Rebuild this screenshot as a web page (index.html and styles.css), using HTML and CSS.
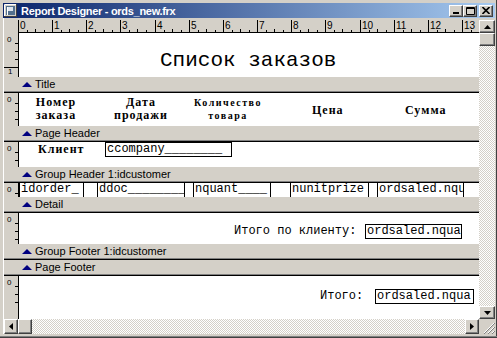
FILE: index.html
```html
<!DOCTYPE html>
<html lang="ru">
<head>
  <meta charset="UTF-8">
  <title>Report Designer - ords_new.frx</title>
  <link rel="stylesheet" href="styles.css">
</head>
<body>
  <div class="window">
    <div class="titlebar">
      <svg class="app-icon" width="13" height="13" viewBox="0 0 13 13">
        <rect x="0.5" y="0.5" width="12" height="12" fill="#d4d0c8" stroke="#404040"/>
        <path d="M0.5 12V0.5H12" fill="none" stroke="#fff"/>
        <rect x="2" y="2" width="9" height="9" fill="#52708f"/>
        <rect x="4" y="3" width="5" height="4" fill="#dfe6ee"/>
        <path d="M3.5 3V11" stroke="#fff"/>
      </svg>
      <span class="title">Report Designer - ords_new.frx</span>
      <div class="caption-buttons">
        <span class="cbtn"><svg width="8" height="7" viewBox="0 0 8 7"><rect x="1" y="5" width="6" height="2" fill="#000"/></svg></span>
        <span class="cbtn"><svg width="9" height="8" viewBox="0 0 9 8"><path d="M0.5 0.5H8.5V7.5H0.5Z M0.5 1.5H8.5" fill="none" stroke="#000"/></svg></span>
        <span class="cbtn close"><svg width="8" height="7" viewBox="0 0 8 7"><path d="M0.5 0L7.5 7M7.5 0L0.5 7" stroke="#000" stroke-width="1.6"/></svg></span>
      </div>
    </div>

    <div class="workspace">
      <div class="ruler-row">
        <div class="ruler-corner"></div>
        <svg class="ruler" width="461" height="15" viewBox="0 0 461 15">
          <path d="M0 14.5H461" stroke="#000"/>
          <path d="M0.5 2V14M34.5 2V14M68.5 2V14M102.5 2V14M137.5 2V14M171.5 2V14M205.5 2V14M239.5 2V14M273.5 2V14M307.5 2V14M342.5 2V14M376.5 2V14M410.5 2V14M444.5 2V14" stroke="#000"/>
          <path d="M9.5 12V14M26.5 12V14M43.5 12V14M60.5 12V14M77.5 12V14M94.5 12V14M111.5 12V14M128.5 12V14M146.5 12V14M163.5 12V14M180.5 12V14M197.5 12V14M214.5 12V14M231.5 12V14M248.5 12V14M265.5 12V14M282.5 12V14M299.5 12V14M316.5 12V14M333.5 12V14M351.5 12V14M368.5 12V14M385.5 12V14M402.5 12V14M419.5 12V14M436.5 12V14M453.5 12V14" stroke="#000"/>
          <path d="M17.5 11V14M51.5 11V14M85.5 11V14M119.5 11V14M154.5 11V14M188.5 11V14M222.5 11V14M256.5 11V14M290.5 11V14M324.5 11V14M359.5 11V14M393.5 11V14M427.5 11V14" stroke="#000"/>
          <text x="2" y="11">0</text>
          <text x="36" y="11">1</text>
          <text x="70" y="11">2</text>
          <text x="104" y="11">3</text>
          <text x="139" y="11">4</text>
          <text x="173" y="11">5</text>
          <text x="207" y="11">6</text>
          <text x="241" y="11">7</text>
          <text x="275" y="11">8</text>
          <text x="309" y="11">9</text>
          <text x="344" y="11">10</text>
          <text x="378" y="11">11</text>
          <text x="412" y="11">12</text>
          <text x="446" y="11">13</text>
        </svg>
      </div>

      <div class="vscroll">
        <span class="sbtn"><svg width="7" height="4" viewBox="0 0 7 4"><path d="M3.5 0L7 4H0Z" fill="#000"/></svg></span>
        <span class="thumb"></span>
        <span class="track"></span>
        <span class="sbtn"><svg width="7" height="4" viewBox="0 0 7 4"><path d="M0 0H7L3.5 4Z" fill="#000"/></svg></span>
      </div>

      <div class="bands">
        <div class="band band-title">
          <div class="vr"><span class="vr-num">0</span><span class="vr-major">1</span></div>
          <div class="area">
            <span class="report-title">Список заказов</span>
          </div>
        </div>
        <div class="bar"><span class="tri"></span>Title</div>

        <div class="band band-page-header">
          <div class="vr"><span class="vr-num">0</span></div>
          <div class="area">
            <span class="col-head h-num">Номер<br>заказа</span>
            <span class="col-head h-date">Дата<br>продажи</span>
            <span class="col-head h-qty">Количество<br>товара</span>
            <span class="col-head h-price">Цена</span>
            <span class="col-head h-sum">Сумма</span>
          </div>
        </div>
        <div class="bar"><span class="tri"></span>Page Header</div>

        <div class="band band-group-header">
          <div class="vr"><span class="vr-num">0</span></div>
          <div class="area">
            <span class="col-head lbl-client">Клиент</span>
            <span class="field fld-company">ccompany________</span>
          </div>
        </div>
        <div class="bar"><span class="tri"></span>Group Header 1:idcustomer</div>

        <div class="band band-detail">
          <div class="vr"><span class="vr-num">0</span></div>
          <div class="area">
            <span class="field cut fld-order">idorder_</span>
            <span class="field cut fld-date">ddoc________</span>
            <span class="field cut fld-qty">nquant____</span>
            <span class="field cut fld-price">nunitprize</span>
            <span class="field cut fld-total">ordsaled.nquant</span>
          </div>
        </div>
        <div class="bar"><span class="tri"></span>Detail</div>

        <div class="band band-group-footer">
          <div class="vr"><span class="vr-num">0</span></div>
          <div class="area">
            <span class="mono lbl-subtotal">Итого по клиенту:</span>
            <span class="field fld-subtotal">ordsaled.nqua</span>
          </div>
        </div>
        <div class="bar"><span class="tri"></span>Group Footer 1:idcustomer</div>

        <div class="bar"><span class="tri"></span>Page Footer</div>

        <div class="band band-summary">
          <div class="vr"><span class="vr-num">0</span></div>
          <div class="area">
            <span class="mono lbl-grand">Итого:</span>
            <span class="field fld-grand">ordsaled.nqua</span>
          </div>
        </div>
      </div>

      <div class="hscroll">
        <span class="sbtn"><svg width="4" height="7" viewBox="0 0 4 7"><path d="M0 3.5L4 0V7Z" fill="#000"/></svg></span>
        <span class="thumb"></span>
        <span class="track"></span>
        <span class="sbtn"><svg width="4" height="7" viewBox="0 0 4 7"><path d="M0 0L4 3.5L0 7Z" fill="#000"/></svg></span>
      </div>

      <div class="grip">
        <svg width="12" height="12" viewBox="0 0 12 12">
          <path d="M11 1L1 11M11 5L5 11M11 9L9 11" stroke="#fff"/>
          <path d="M12 1L1 12M12 5L5 12M12 9L9 12" stroke="#808080"/>
        </svg>
      </div>
    </div>
  </div>
</body>
</html>
```

FILE: styles.css
```css
* {
  box-sizing: border-box;
}

body {
  margin: 0;
  background: #d4d0c8;
  font-family: "Liberation Sans", Arial, sans-serif;
}

.window {
  width: 497px;
  height: 338px;
  padding: 3px 2px 4px 3px;
  background: #d4d0c8;
  display: flex;
  flex-direction: column;
  box-shadow: inset 0 -1px #404040, inset 0 -2px #808080, inset -1px 0 #404040;
}

/* title bar */
.titlebar {
  height: 15px;
  flex: none;
  display: flex;
  align-items: center;
  background: linear-gradient(to right, #0a246a, #a6caf0);
  color: #fff;
}

.app-icon {
  flex: none;
  margin-left: 1px;
}

.title {
  margin-left: 4px;
  font-size: 11px;
  font-weight: bold;
  letter-spacing: -0.3px;
  white-space: nowrap;
}

.caption-buttons {
  margin-left: auto;
  margin-right: 2px;
  display: flex;
}

.cbtn,
.sbtn,
.thumb {
  flex: none;
  display: flex;
  align-items: center;
  justify-content: center;
  background: #d4d0c8;
  border: 1px solid;
  border-color: #fff #404040 #404040 #fff;
  box-shadow: inset -1px -1px #808080;
}

.cbtn {
  width: 14px;
  height: 12px;
}

.cbtn.close {
  margin-left: 2px;
}

/* designer area */
.workspace {
  flex: 1;
  display: grid;
  grid-template-columns: 475px 16px;
  grid-template-rows: 15px 286px 15px;
  border-left: 1px solid #fff;
}

.ruler-row {
  display: flex;
  background: #d4d0c8;
}

.ruler-corner {
  width: 14px;
  flex: none;
}

.ruler {
  display: block;
}

.ruler text {
  font-family: "Liberation Sans", Arial, sans-serif;
  font-size: 10px;
  fill: #000;
}

.track {
  flex: 1;
  background: repeating-conic-gradient(#d4d0c8 0 25%, #fff 0 50%) 0 0 / 2px 2px;
}

.vscroll {
  grid-column: 2;
  grid-row: 1 / 3;
  display: flex;
  flex-direction: column;
  padding-top: 2px;
  background: #d4d0c8;
}

.vscroll .sbtn,
.vscroll .thumb {
  width: 16px;
  height: 13px;
}

.hscroll {
  grid-column: 1;
  grid-row: 3;
  display: flex;
}

.hscroll .sbtn,
.hscroll .thumb {
  width: 14px;
  height: 15px;
}

.grip {
  grid-column: 2;
  grid-row: 3;
  display: flex;
  align-items: flex-end;
  justify-content: flex-end;
  background: #d4d0c8;
}

.bands {
  grid-column: 1;
  grid-row: 2;
  overflow: hidden;
  display: flex;
  flex-direction: column;
}

/* report bands */
.band {
  display: flex;
  flex: none;
  overflow: hidden;
}

.band-title { height: 44px; }
.band-page-header { height: 33px; }
.band-group-header { height: 25px; }
.band-detail { height: 14px; }
.band-group-footer { height: 31px; }
.band-summary { flex: 1; }

.vr {
  width: 15px;
  flex: none;
  position: relative;
  border-right: 1px solid #000;
  background-color: #d4d0c8;
  background-image: linear-gradient(#000, #000), linear-gradient(#000, #000), linear-gradient(#000, #000);
  background-size: 3px 1px;
  background-repeat: no-repeat;
  background-position: right 0 top 10px, right 0 top 18px, right 0 top 26px;
}

.vr-num {
  position: absolute;
  left: 3px;
  top: 3px;
  font-size: 8px;
  line-height: 8px;
}

.vr-major {
  position: absolute;
  left: 0;
  top: 34px;
  width: 14px;
  padding-left: 4px;
  border-top: 1px solid #000;
  font-size: 8px;
  line-height: 8px;
}

.area {
  flex: 1;
  position: relative;
  background: #fff;
}

.bar {
  height: 15px;
  flex: none;
  display: flex;
  align-items: center;
  padding-left: 18px;
  background: #d4d0c8;
  border-bottom: 1px solid #808080;
  box-shadow: 0 1px #000;
  margin-bottom: 1px;
  font-size: 11px;
  color: #000;
  white-space: nowrap;
}

.tri {
  width: 0;
  height: 0;
  margin-right: 3px;
  border-left: 5px solid transparent;
  border-right: 5px solid transparent;
  border-bottom: 5px solid #000080;
}

/* report controls */
.report-title {
  position: absolute;
  left: 141px;
  top: 17px;
  font-family: "Liberation Mono", "Courier New", monospace;
  font-size: 21px;
  line-height: 21px;
  white-space: nowrap;
}

.col-head {
  position: absolute;
  font-family: "Liberation Serif", "Times New Roman", serif;
  font-weight: bold;
  font-size: 12px;
  line-height: 13px;
  letter-spacing: 1px;
  text-align: center;
  white-space: nowrap;
}

.h-num { left: 7px; top: 3px; width: 60px; }
.h-date { left: 92px; top: 3px; width: 60px; }
.h-qty { left: 169px; top: 3px; width: 80px; font-size: 10px; letter-spacing: 1.5px; }
.h-price { left: 293px; top: 11px; }
.h-sum { left: 386px; top: 11px; }
.lbl-client { left: 19px; top: 1px; }

.mono,
.field {
  position: absolute;
  font-family: "Liberation Mono", "Courier New", monospace;
  font-size: 12px;
  line-height: 13px;
  white-space: nowrap;
}

.field {
  height: 15px;
  padding: 0 1px;
  border: 1px solid #000;
  overflow: hidden;
  background: #fff;
}

.field.cut {
  top: 0;
  height: 14px;
  border-top: none;
  border-bottom: none;
}

.fld-company { left: 86px; top: 0; width: 127px; }
.fld-order { left: 0; width: 65px; }
.fld-date { left: 78px; width: 88px; }
.fld-qty { left: 174px; width: 78px; }
.fld-price { left: 271px; width: 79px; }
.fld-total { left: 358px; width: 87px; }

.lbl-subtotal { left: 215px; top: 12px; }
.fld-subtotal { left: 346px; top: 11px; width: 97px; }
.lbl-grand { left: 301px; top: 14px; }
.fld-grand { left: 356px; top: 13px; width: 99px; }
```
